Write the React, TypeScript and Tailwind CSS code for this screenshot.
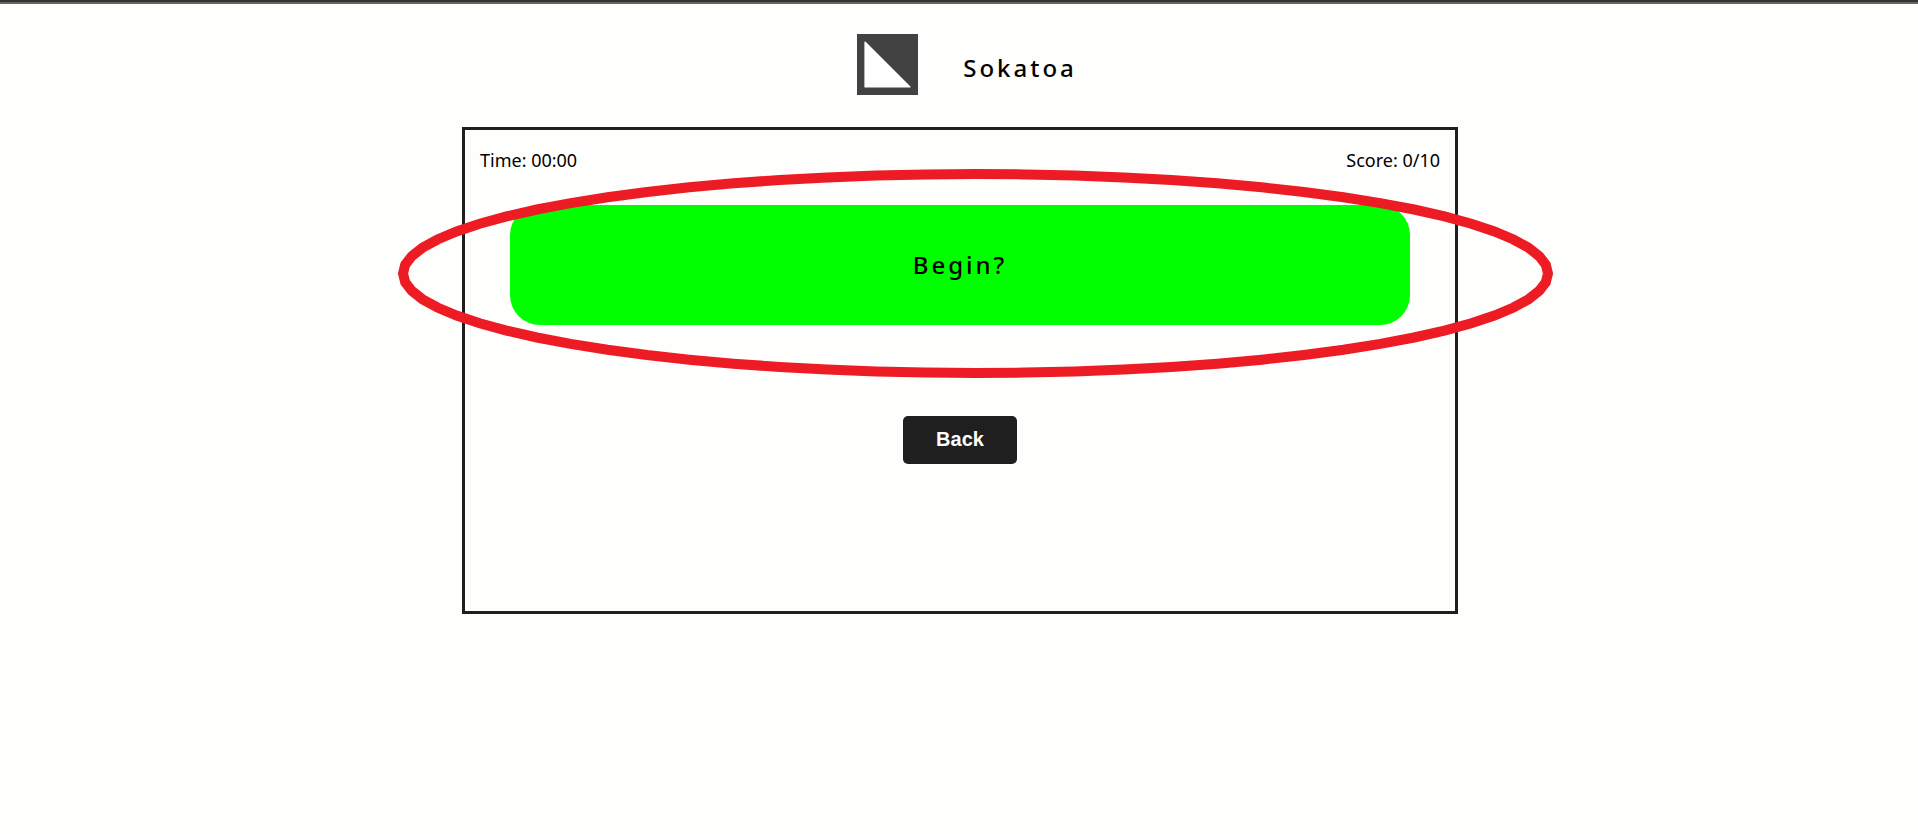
function Logo() {
  return (
    <svg className="size-[61px]" viewBox="0 0 61 61" role="img" aria-label="Sokatoa logo">
      <rect width="61" height="61" fill="#424242" />
      <path d="M8 8 L53 53 H8 Z" fill="#fff" stroke="#fff" strokeWidth="1.2" strokeLinejoin="round" />
    </svg>
  );
}

// The ring is drawn from straight segments, one for every five degrees.
const ringPoints = Array.from({ length: 72 }, (_, step) => {
  const angle = (step * 5 * Math.PI) / 180;
  const x = 577.5 + 572.5 * Math.cos(angle);
  const y = 104.5 + 99.5 * Math.sin(angle);
  return `${x.toFixed(1)},${y.toFixed(1)}`;
}).join(" ");

function Highlight() {
  return (
    <svg
      className="pointer-events-none absolute top-[39px] -left-[67px] h-[209px] w-[1155px]"
      viewBox="0 0 1155 209"
      aria-hidden="true"
    >
      <polygon points={ringPoints} fill="none" stroke="#ed1c24" strokeWidth="10" />
    </svg>
  );
}

export default function App() {
  return (
    <div className="min-h-screen border-t-2 border-[#333333] bg-[#fefefd] font-['Noto_Sans',sans-serif] text-black">
      <div className="border-t-2 border-[#666666]" />
      <div className="flex flex-col items-center pt-[30px] pl-0.5">
        <header className="flex items-center gap-[45px] pl-3.5">
          <Logo />
          <h1 className="pt-1.5 text-2xl font-medium tracking-[3px]">Sokatoa</h1>
        </header>
        <main className="relative mt-8 flex min-h-[487px] w-full max-w-[996px] flex-col items-center border-3 border-[#1f1f1f] px-[15px] pt-4">
          <div className="flex w-full justify-between text-lg">
            <p>Time: 00:00</p>
            <p>Score: 0/10</p>
          </div>
          <button
            type="button"
            className="mt-[31px] h-[120px] w-full max-w-[900px] rounded-[30px] bg-[#00ff00] text-2xl font-medium tracking-[3px]"
          >
            Begin?
          </button>
          <button
            type="button"
            className="mt-[91px] rounded-[5px] bg-[#1f1f1f] px-[33px] pt-[9px] pb-[11px] font-['Liberation_Sans',Arial,sans-serif] text-xl font-bold text-white"
          >
            Back
          </button>
          <Highlight />
        </main>
      </div>
    </div>
  );
}
